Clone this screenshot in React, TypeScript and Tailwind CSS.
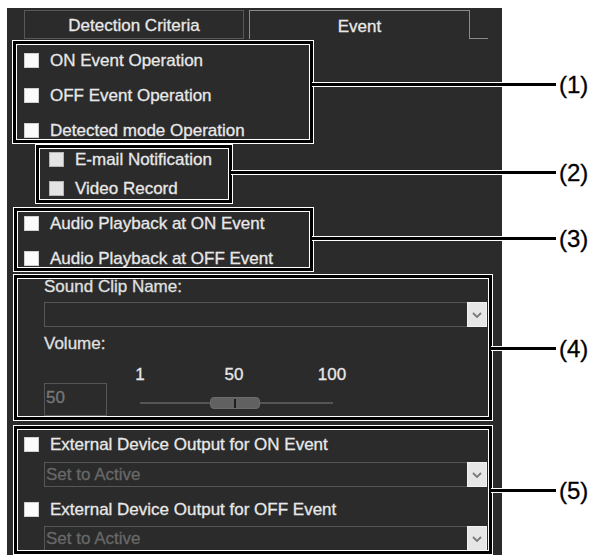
import React from 'react'

type CalloutProps = {
  label: string
  className: string
  leaderClass: string
  children: React.ReactNode
}

// white / black / white frame with a leader line running out to the number
function Callout({ label, className, leaderClass, children }: CalloutProps) {
  return (
    <div className={`relative shrink-0 border border-white ${className}`}>
      <div className="h-full border-[3px] border-black">
        <div className="h-full border border-white overflow-hidden">{children}</div>
      </div>
      <div className={`absolute left-[calc(100%-1px)] h-[5px] border-y border-white bg-black ${leaderClass}`}>
        <span className="absolute left-full top-1/2 -translate-y-1/2 ml-[3px] text-[24px] leading-none text-black whitespace-nowrap">
          {label}
        </span>
      </div>
    </div>
  )
}

function Check({ muted }: { muted?: boolean }) {
  return (
    <span
      className={
        muted
          ? 'w-[15px] h-[15px] shrink-0 bg-[#e4e4e4] border border-[#b5b5b5]'
          : 'w-[15px] h-[15px] shrink-0 bg-[#fbfbfb] border border-[#cfcfcf]'
      }
    />
  )
}

function Chevron() {
  return (
    <svg width="10" height="6" viewBox="0 0 10 6">
      <polyline points="1,1 5,5 9,1" fill="none" stroke="#7b7b7b" strokeWidth="1.8" />
    </svg>
  )
}

function Select({ value }: { value?: string }) {
  return (
    <div className="flex h-[25px] w-[443px] ml-[26px] shrink-0">
      <div className="flex-1 flex items-center border border-r-0 border-[#565656] pl-[1px] text-[#686868] whitespace-nowrap">
        {value}
      </div>
      <div className="w-[20px] bg-[#e6e6e6] border border-[#f3f3f3] flex items-center justify-center">
        <Chevron />
      </div>
    </div>
  )
}

export default function App() {
  return (
    <div className="w-[592px] h-[555px] bg-white overflow-hidden font-['Liberation_Sans',Arial,sans-serif]">
      <div className="ml-[7px] mt-[8px] w-[495px] h-[547px] bg-[#2b2b2b] text-[17px] leading-none text-[#e8e8e8] [-webkit-text-stroke:0.3px_currentColor] flex flex-col">
        {/* tabs */}
        <div className="flex h-[29px] mt-[2px] pl-[17px] shrink-0">
          <div className="w-[220px] border border-[#585858] flex items-center justify-center pt-[2px]">
            Detection Criteria
          </div>
          <div className="w-[221px] ml-[5px] border border-b-0 border-[#8a8a8a] flex items-center justify-center pt-[2px]">
            Event
          </div>
          <div className="w-[18px] border-b border-[#8a8a8a]" />
        </div>

        {/* (1) */}
        <Callout label="(1)" className="mt-[1px] ml-[5px] w-[302px] h-[104px]" leaderClass="top-[41px] w-[244px]">
          <div className="-mt-[2px] flex flex-col">
            {['ON Event Operation', 'OFF Event Operation', 'Detected mode Operation'].map((t) => (
              <div key={t} className="h-[35px] flex items-center gap-[11px] pl-[7px] whitespace-nowrap">
                <Check />
                <span>{t}</span>
              </div>
            ))}
          </div>
        </Callout>

        {/* (2) */}
        <Callout label="(2)" className="ml-[28px] w-[198px] h-[60px]" leaderClass="top-[25px] w-[325px]">
          <div className="-mt-[4px] flex flex-col">
            {['E-mail Notification', 'Video Record'].map((t) => (
              <div key={t} className="h-[29px] flex items-center gap-[11px] pl-[9px] whitespace-nowrap">
                <Check muted />
                <span>{t}</span>
              </div>
            ))}
          </div>
        </Callout>

        {/* (3) */}
        <Callout label="(3)" className="mt-[3px] ml-[6px] w-[301px] h-[65px]" leaderClass="top-[28px] w-[244px]">
          <div className="-mt-[6px] flex flex-col">
            {['Audio Playback at ON Event', 'Audio Playback at OFF Event'].map((t) => (
              <div key={t} className="h-[35px] flex items-center gap-[11px] pl-[6px] whitespace-nowrap">
                <Check />
                <span>{t}</span>
              </div>
            ))}
          </div>
        </Callout>

        {/* (4) */}
        <Callout label="(4)" className="mt-[2px] ml-[6px] w-[480px] h-[147px]" leaderClass="top-[71px] w-[65px]">
          <div className="flex flex-col">
            <div className="-mt-[1px] ml-[26px] h-[17px] text-[#e0e0e0]">Sound Clip Name:</div>
            <div className="mt-[7px]">
              <Select />
            </div>
            <div className="mt-[8px] ml-[26px] h-[17px] text-[#e0e0e0]">Volume:</div>
            <div className="mt-[14px] flex h-[17px]">
              <span className="ml-[102px] w-[40px] text-center">1</span>
              <span className="ml-[54px] w-[40px] text-center">50</span>
              <span className="ml-[58px] w-[40px] text-center">100</span>
            </div>
            <div className="flex items-start">
              <div className="ml-[26px] w-[63px] h-[33px] border border-[#565656] pl-[1px] pt-[5px] text-[#777]">50</div>
              <div className="relative ml-[33px] mt-[14px] w-[193px] h-[12px]">
                <div className="absolute left-0 right-0 top-[5px] h-[2px] bg-[#555]" />
                <div className="absolute left-[70px] top-0 w-[50px] h-[12px] rounded-[4px] bg-[#616161] border border-[#6c6c6c] flex items-center justify-center">
                  <div className="w-[2px] h-[9px] bg-[#1f1f1f]" />
                </div>
              </div>
            </div>
          </div>
        </Callout>

        {/* (5) */}
        <Callout label="(5)" className="mt-[4px] ml-[6px] w-[480px] h-[130px]" leaderClass="top-[62px] w-[65px]">
          <div className="flex flex-col">
            <div className="h-[28px] flex items-center gap-[11px] pl-[6px] whitespace-nowrap">
              <Check />
              <span>External Device Output for ON Event</span>
            </div>
            <div className="mt-[4px]">
              <Select value="Set to Active" />
            </div>
            <div className="mt-[8px] h-[28px] flex items-center gap-[11px] pl-[6px] whitespace-nowrap">
              <Check />
              <span>External Device Output for OFF Event</span>
            </div>
            <div className="mt-[3px]">
              <Select value="Set to Active" />
            </div>
          </div>
        </Callout>
      </div>
    </div>
  )
}
